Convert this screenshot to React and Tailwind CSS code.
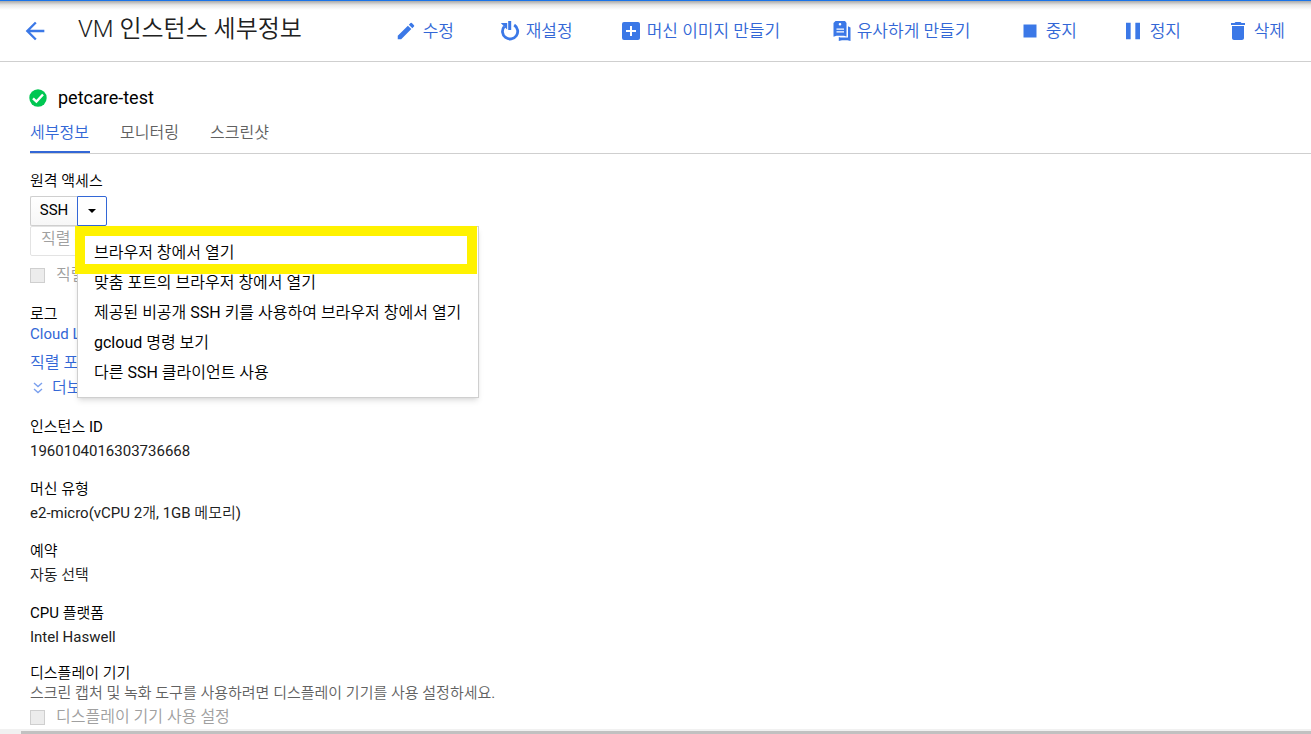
import { MdArrowBack, MdEdit, MdAddBox, MdStop, MdPause, MdDelete } from "react-icons/md";

function ResetIcon({ className }) {
  return (
    <svg viewBox="0 0 20 22" className={className} fill="none" stroke="currentColor" aria-hidden="true">
      <path d="M4.200 6.600A7.600 7.600 0 1 0 14.200 5" strokeWidth="2.800" />
      <path d="M9.700 1v9" strokeWidth="3" />
      <path d="M0.800 3h6.400v6.600L5 7.400z" fill="currentColor" stroke="none" />
    </svg>
  );
}

function CloneIcon({ className }) {
  return (
    <svg viewBox="0 0 18 22" className={className} fill="currentColor" aria-hidden="true">
      <path
        fillRule="evenodd"
        d="M2.500 1h9.500l1.500 2v13.500l-2.500-.8H3.500L.5 16.700V3zM7 2.900a1.300 1.300 0 1 0 0 2.600 1.300 1.300 0 0 0 0-2.600zM3.500 8.500v1.300h7.500V8.500zM3.500 11.300v1.300h7.500v-1.300z"
      />
      <path d="M15 6.300 17.500 7.500V21l-3-.8H9L5.800 21v-4l1.700.6H15z" />
    </svg>
  );
}

function CheckBadge() {
  return (
    <svg viewBox="0 0 18 18" className="size-[18px]" aria-hidden="true">
      <circle cx="9" cy="9" r="8.700" fill="#00c752" />
      <path d="M4 9.300 7.400 12.600 14 5.500" fill="none" stroke="#fff" strokeWidth="2.400" />
    </svg>
  );
}

const actions = [
  { label: "수정", Icon: MdEdit, size: "size-[22px]", gap: "gap-1.5" },
  { label: "재설정", Icon: ResetIcon, size: "w-5 h-[22px]", gap: "gap-1.5" },
  { label: "머신 이미지 만들기", Icon: MdAddBox, size: "size-6", gap: "gap-1" },
  { label: "유사하게 만들기", Icon: CloneIcon, size: "w-[18px] h-[22px]", gap: "gap-1.5" },
  { label: "중지", Icon: MdStop, size: "size-[26px]", gap: "gap-[3px]" },
  { label: "정지", Icon: MdPause, size: "size-7", gap: "gap-[3px]" },
  { label: "삭제", Icon: MdDelete, size: "size-6", gap: "gap-1" },
];

const menuItems = [
  "브라우저 창에서 열기",
  "맞춤 포트의 브라우저 창에서 열기",
  "제공된 비공개 SSH 키를 사용하여 브라우저 창에서 열기",
  "gcloud 명령 보기",
  "다른 SSH 클라이언트 사용",
];

const details = [
  ["인스턴스 ID", "1960104016303736668"],
  ["머신 유형", "e2-micro(vCPU 2개, 1GB 메모리)"],
  ["예약", "자동 선택"],
  ["CPU 플랫폼", "Intel Haswell"],
];

const box = "size-[15px] shrink-0 appearance-none border border-[#cfcfcf] bg-[#ececec]";

export default function App() {
  return (
    <div className="flex h-screen flex-col overflow-hidden bg-white font-['Roboto','Noto_Sans_CJK_KR_DemiLight','Noto_Sans_CJK_KR',sans-serif] text-[15px] leading-5 text-black">
      <div className="h-px shrink-0 bg-[#1a73e8]" />
      <header className="flex h-[61px] shrink-0 items-center justify-between border-b border-[#cfcfcf] bg-[linear-gradient(#a8a8a8,#e6e6e6_4px,#ffffff_9px)] pr-[26px] pl-[21px]">
        <div className="flex items-center gap-[29px]">
          <button aria-label="뒤로" className="text-[#3b78e7]">
            <MdArrowBack className="size-7" />
          </button>
          <h1 className="pb-1 text-2xl leading-8 whitespace-nowrap font-[350] text-[#212121]">VM 인스턴스 세부정보</h1>
        </div>
        <div className="grid grid-cols-[105px_119px_214px_184px_102px_107px_auto] text-[17px] font-[350] text-[#3367d6]">
          {actions.map(({ label, Icon, size, gap }) => (
            <button key={label} className={`flex items-center whitespace-nowrap ${gap}`}>
              <Icon className={`${size} shrink-0 text-[#3b78e7]`} />
              {label}
            </button>
          ))}
        </div>
      </header>

      <main className="min-h-0 flex-1 overflow-hidden pl-[30px]">
        <div className="flex items-center gap-[11px] pt-[26px] text-lg leading-5">
          <div className="-ml-px">
            <CheckBadge />
          </div>
          <h2>petcare-test</h2>
        </div>
        <nav className="mt-2 flex h-[38px] gap-[30px] border-b border-[#cfcfcf] text-base leading-6 font-[350] text-[#616161]">
          <a href="#details" className="min-w-15 border-b-2 border-[#3367d6] pt-[5px] text-[#3367d6]">세부정보</a>
          <a href="#monitoring" className="min-w-15 pt-[5px]">모니터링</a>
          <a href="#screenshot" className="min-w-15 pt-[5px]">스크린샷</a>
        </nav>

        <section className="pt-[17px]">
          <h3>원격 액세스</h3>
          <div className="relative mt-[5px] flex w-fit">
            <button className="h-[30px] w-[47px] rounded-l-xs border border-r-0 border-[#cfcfcf] bg-linear-to-b from-white to-[#f7f7f7] pb-0.5">SSH</button>
            <button aria-label="SSH 옵션" className="flex h-[30px] w-[30px] items-center justify-center rounded-r-xs border border-[#3367d6] bg-white">
              <svg viewBox="0 0 10 5" className="h-1 w-2" aria-hidden="true">
                <path d="M0 0h10L5 5z" />
              </svg>
            </button>
            <ul className="absolute top-[30px] left-[47px] h-[172px] w-[402px] border border-[#cfcfcf] bg-white pt-[11px] text-base leading-[30px] shadow-md">
              {menuItems.map((item) => (
                <li key={item}>
                  <button className="h-[30px] w-full pl-4 text-left whitespace-nowrap">{item}</button>
                </li>
              ))}
              <li aria-hidden="true" className="pointer-events-none absolute -top-px -left-[3px] h-12 w-[402px] border-[10px] border-[#fff200]" />
            </ul>
          </div>
          <button disabled className="block h-[30px] w-60 rounded-xs border border-[#e3e3e3] pb-1.5 pl-2.5 text-left text-base text-[#a0a0a0]">
            직렬 콘솔에 연결
          </button>
          <label className="mt-[9px] flex items-center gap-[11px] text-base leading-5 text-[#a0a0a0]">
            <input type="checkbox" disabled className={box} />
            직렬 포트에 연결 사용 설정
          </label>
        </section>

        <section className="pt-[19px]">
          <h3>로그</h3>
          <a href="#logging" className="block text-[#3367d6]">Cloud Logging</a>
          <a href="#serial" className="mt-[9px] block text-base leading-5 text-[#3367d6]">직렬 포트 1(콘솔)</a>
          <button className="mt-[5px] flex items-center gap-[7px] text-base leading-5 text-[#3367d6]">
            <svg viewBox="0 0 14 14" className="ml-px size-3.5" fill="none" stroke="#7ba0ee" strokeWidth="1.400" aria-hidden="true">
              <path d="m3 2 4 3.500L11 2M3 8l4 3.500L11 8" />
            </svg>
            더보기
          </button>
        </section>

        <dl className="pt-[19px]">
          {details.map(([term, value]) => (
            <div key={term} className="mb-[18px]">
              <dt>{term}</dt>
              <dd className="mt-1 h-5 text-[#212121]">{value}</dd>
            </div>
          ))}
        </dl>

        <section className="-mt-0.5">
          <h3>디스플레이 기기</h3>
          <p className="text-[#616161]">스크린 캡처 및 녹화 도구를 사용하려면 디스플레이 기기를 사용 설정하세요.</p>
          <label className="mt-1 flex items-center gap-[11px] text-base leading-5 text-[#a0a0a0]">
            <input type="checkbox" disabled className={box} />
            디스플레이 기기 사용 설정
          </label>
        </section>
      </main>

      <div className="h-[5px] shrink-0 bg-[#f1f1f1] pt-0.5 pl-[21px]">
        <div className="h-[3px] bg-[#c1c1c1]" />
      </div>
    </div>
  );
}
